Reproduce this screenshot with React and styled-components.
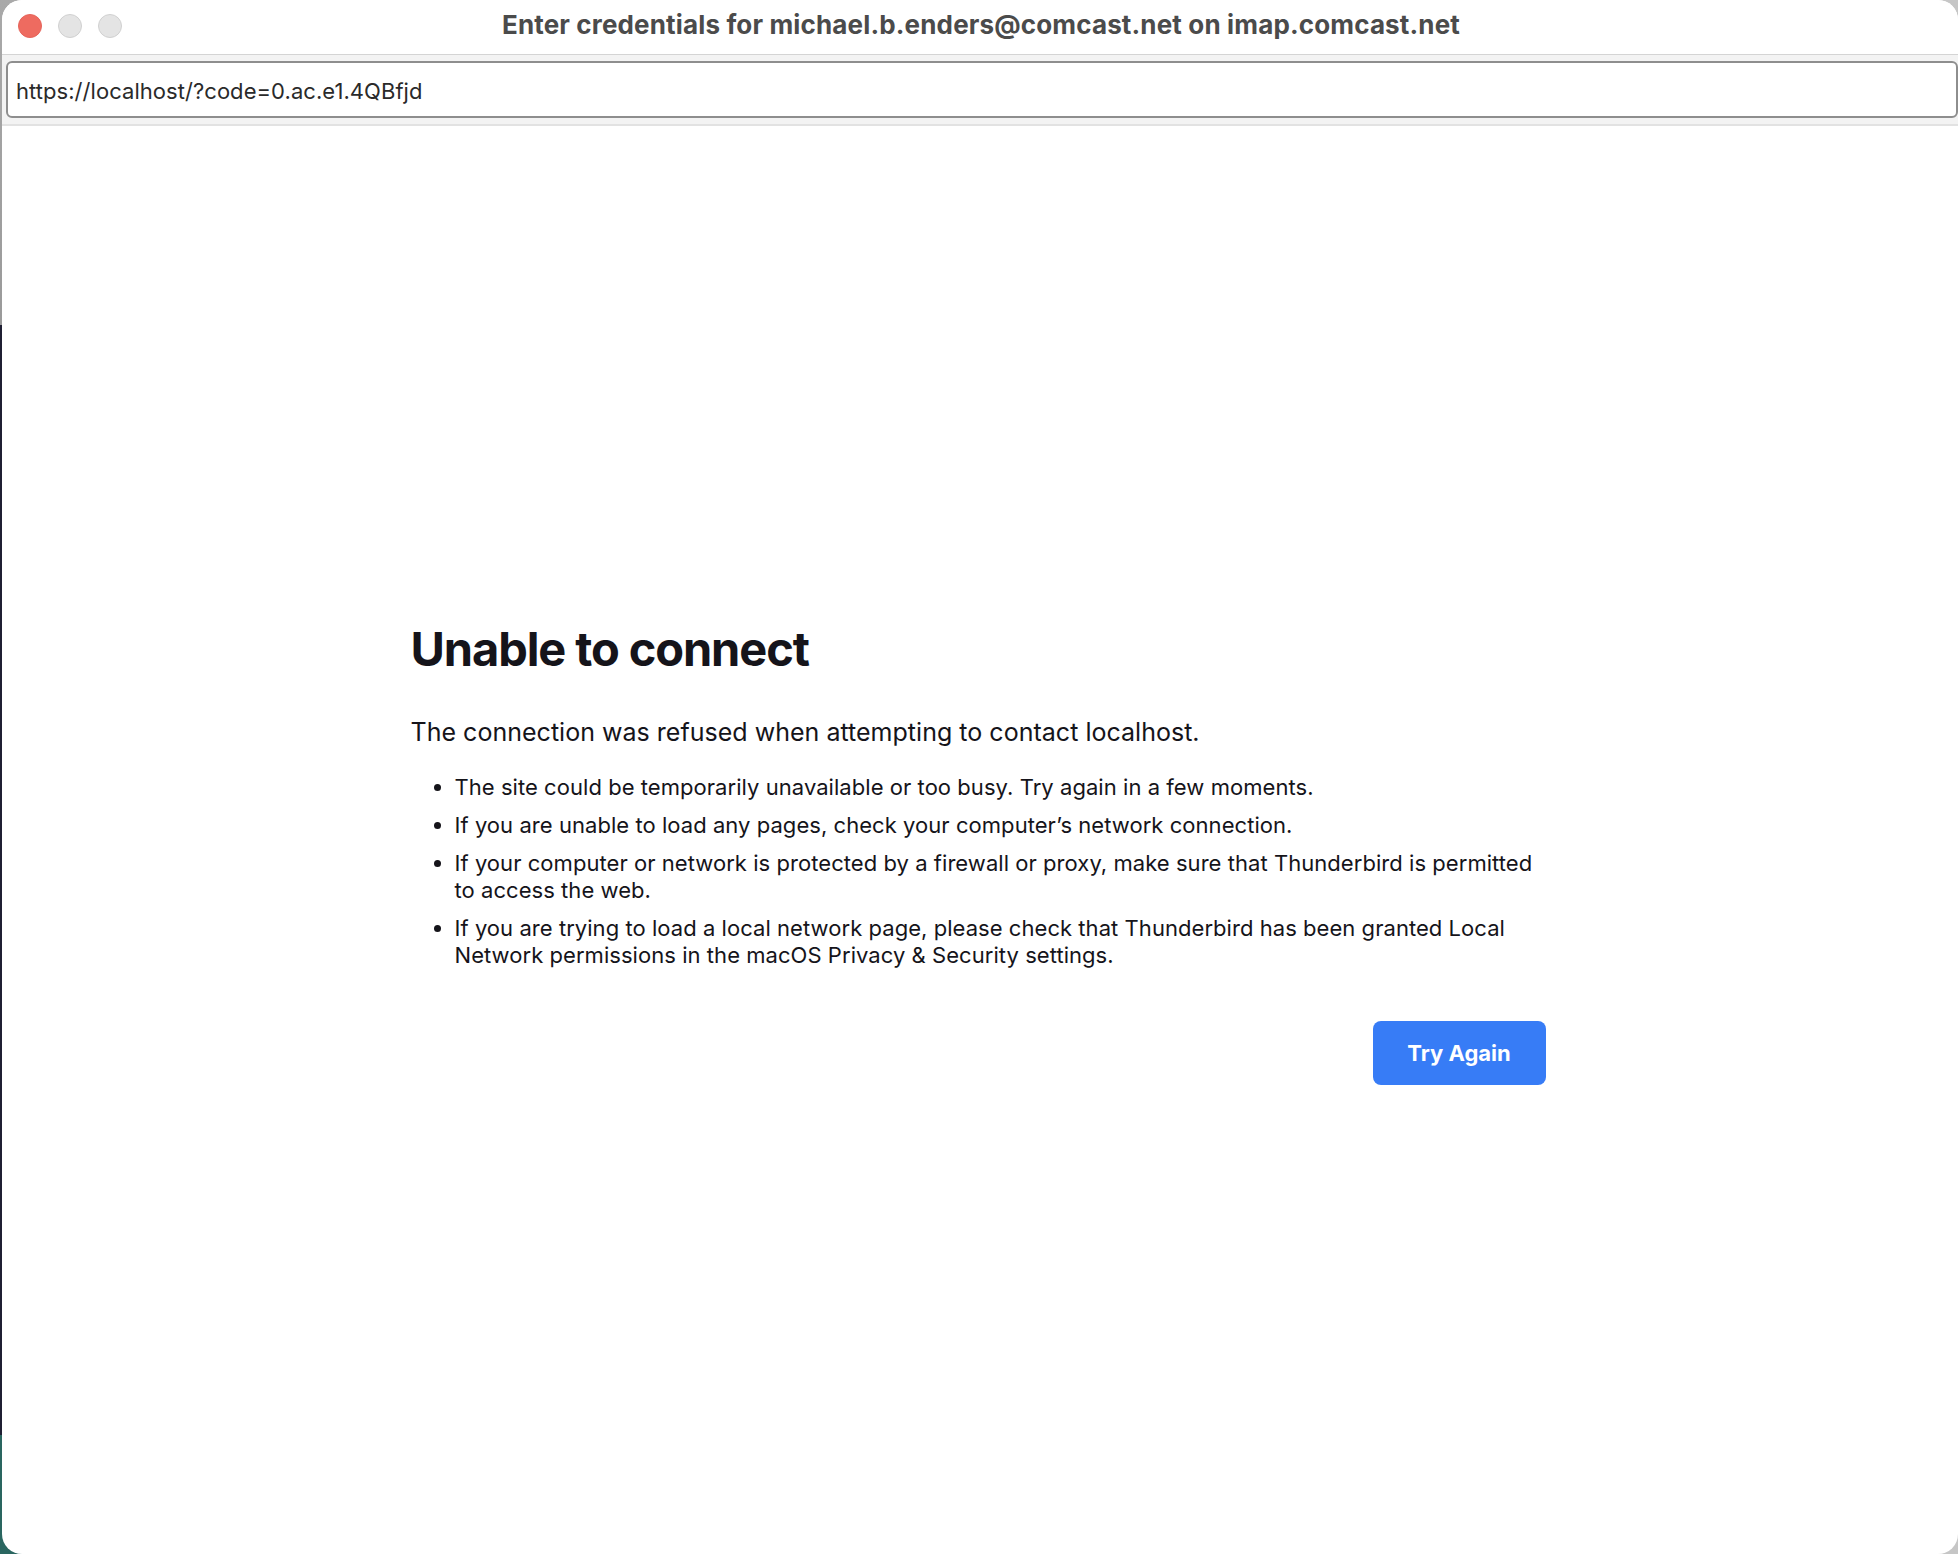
import React from "react";
import styled, { createGlobalStyle } from "styled-components";

const GlobalStyle = createGlobalStyle`
  html, body {
    margin: 0;
    padding: 0;
    height: 100%;
  }
  body {
    overflow: hidden;
    font-family: "Inter", "Liberation Sans", sans-serif;
    background:
      linear-gradient(
        to bottom,
        #a9a9a9 0,
        #9a9a9a 325px,
        #1f1f33 325px,
        #1f1f33 1435px,
        #2a6660 1435px,
        #2a6660 100%
      ) left top / 50% 100% no-repeat,
      #c6c6c6;
  }
`;

const Desktop = styled.div`
  width: 1958px;
  height: 1554px;
  padding-left: 2px;
  box-sizing: border-box;
`;

const Window = styled.div`
  width: 100%;
  height: 100%;
  display: flex;
  flex-direction: column;
  background: #fff;
  border-radius: 20px;
  overflow: hidden;
`;

const TitleBar = styled.header`
  position: relative;
  height: 54px;
  flex-shrink: 0;
  box-sizing: content-box;
  display: flex;
  align-items: center;
  justify-content: center;
  border-bottom: 1px solid #d4d4d4;
  background: #fff;
`;

const Lights = styled.div`
  position: absolute;
  top: 14px;
  left: 16px;
  display: flex;
  gap: 16px;
`;

const Light = styled.span`
  width: 24px;
  height: 24px;
  box-sizing: border-box;
  border-radius: 50%;
  background: ${(props) => (props.$active ? "#ee6b60" : "#e4e4e4")};
  border: 1px solid ${(props) => (props.$active ? "#e5645a" : "#d0d0d0")};
`;

const Title = styled.h1`
  margin: 0 0 5px 2px;
  font-size: 26px;
  font-weight: 700;
  letter-spacing: 0.15px;
  color: #4b4b4b;
  white-space: nowrap;
`;

const Toolbar = styled.div`
  height: 71px;
  flex-shrink: 0;
  box-sizing: border-box;
  padding: 6px 0 6px 4px;
  background: #f3f3f3;
  border-bottom: 2px solid #e2e2e2;
`;

const AddressBox = styled.div`
  height: 100%;
  box-sizing: border-box;
  display: flex;
  align-items: center;
  padding: 3px 0 0 8px;
  background: #fff;
  border: 2px solid #8e8e8e;
  border-radius: 6px;
  font-size: 22px;
  letter-spacing: 0.05px;
  color: #2a2a2a;
`;

const Main = styled.main`
  flex: 1;
  display: flex;
  justify-content: center;
  padding-top: 494px;
`;

const ErrorPage = styled.section`
  width: 1135px;
  color: #15141a;
  margin-right: 4px;
`;

const Heading = styled.h2`
  margin: 0;
  font-size: 47px;
  line-height: 58px;
  font-weight: 700;
  letter-spacing: -1.1px;
`;

const Lead = styled.p`
  margin: 38px 0 0;
  font-size: 25px;
  line-height: 33px;
  letter-spacing: 0.02px;
`;

const Hints = styled.ul`
  margin: 25px 0 0;
  padding: 0 0 0 44px;
  display: flex;
  flex-direction: column;
  gap: 11px;
`;

const Hint = styled.li`
  font-size: 22px;
  line-height: 27px;
  letter-spacing: 0.05px;
`;

const Actions = styled.div`
  display: flex;
  justify-content: flex-end;
  margin-top: 52px;
`;

const RetryButton = styled.button`
  width: 173px;
  height: 64px;
  border: none;
  border-radius: 8px;
  background: #377cf6;
  color: #fff;
  font-family: inherit;
  font-size: 22px;
  font-weight: 700;
`;

const hints = [
  "The site could be temporarily unavailable or too busy. Try again in a few moments.",
  "If you are unable to load any pages, check your computer’s network connection.",
  "If your computer or network is protected by a firewall or proxy, make sure that Thunderbird is permitted to access the web.",
  "If you are trying to load a local network page, please check that Thunderbird has been granted Local Network permissions in the macOS Privacy & Security settings.",
];

const App = () => {
  return (
    <Desktop>
      <GlobalStyle />
      <Window>
        <TitleBar>
          <Lights>
            <Light $active />
            <Light />
            <Light />
          </Lights>
          <Title>Enter credentials for michael.b.enders@comcast.net on imap.comcast.net</Title>
        </TitleBar>
        <Toolbar>
          <AddressBox>https://localhost/?code=0.ac.e1.4QBfjd</AddressBox>
        </Toolbar>
        <Main>
          <ErrorPage>
            <Heading>Unable to connect</Heading>
            <Lead>The connection was refused when attempting to contact localhost.</Lead>
            <Hints>
              {hints.map((hint) => (
                <Hint key={hint}>{hint}</Hint>
              ))}
            </Hints>
            <Actions>
              <RetryButton>Try Again</RetryButton>
            </Actions>
          </ErrorPage>
        </Main>
      </Window>
    </Desktop>
  );
};

export default App;
